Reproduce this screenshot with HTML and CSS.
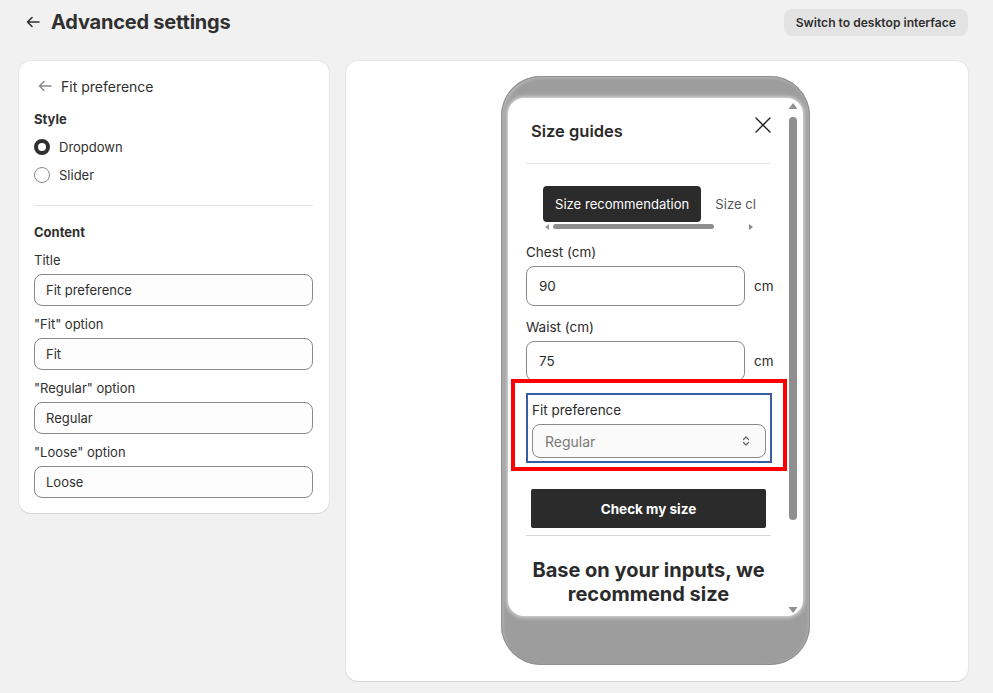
FILE: index.html
```html
<!DOCTYPE html>
<html lang="en">
<head>
<meta charset="utf-8">
<title>Advanced settings</title>
<link rel="stylesheet" href="styles.css">
</head>
<body>
<header class="topbar">
  <div class="title-wrap">
    <svg class="back" width="16" height="16" viewBox="0 0 16 16"><path d="M14 8H2.5M2.5 8l4.5-4.5M2.5 8l4.5 4.5" fill="none" stroke="#303030" stroke-width="1.6" stroke-linecap="round" stroke-linejoin="round"/></svg>
    <h1>Advanced settings</h1>
  </div>
  <button class="switch-btn">Switch to desktop interface</button>
</header>
<main class="layout">
  <aside class="card settings">
    <div class="back-row">
      <svg width="16" height="16" viewBox="0 0 16 16"><path d="M14 8H2.5M2.5 8l4.5-4.5M2.5 8l4.5 4.5" fill="none" stroke="#8a8a8a" stroke-width="1.5" stroke-linecap="round" stroke-linejoin="round"/></svg>
      <span>Fit preference</span>
    </div>
    <section class="group">
      <h2>Style</h2>
      <label class="radio"><span class="dot checked"></span>Dropdown</label>
      <label class="radio"><span class="dot"></span>Slider</label>
    </section>
    <hr class="divider">
    <section class="group">
      <h2>Content</h2>
      <div class="field"><div class="flabel">Title</div><div class="input">Fit preference</div></div>
      <div class="field"><div class="flabel">"Fit" option</div><div class="input">Fit</div></div>
      <div class="field"><div class="flabel">"Regular" option</div><div class="input">Regular</div></div>
      <div class="field"><div class="flabel">"Loose" option</div><div class="input">Loose</div></div>
    </section>
  </aside>
  <section class="card preview">
    <div class="phone">
      <div class="screen">
        <div class="screen-content">
          <div class="sg-head">
            <span class="sg-title">Size guides</span>
            <svg class="close" width="16" height="16" viewBox="0 0 16 16"><path d="M1 1l14 14M15 1L1 15" stroke="#222" stroke-width="1.4" stroke-linecap="round"/></svg>
          </div>
          <div class="rule"></div>
          <div class="tabs">
            <div class="tab-row">
              <span class="tab active">Size recommendation</span>
              <span class="tab">Size cl</span>
            </div>
            <div class="hscroll">
              <svg width="5" height="6" viewBox="0 0 5 6"><path d="M0 3L4 0V6Z" fill="#9a9a9a"/></svg>
              <span class="hthumb"></span>
              <span class="hgap"></span>
              <svg width="5" height="6" viewBox="0 0 5 6"><path d="M5 3L1 0V6Z" fill="#8a8a8a"/></svg>
            </div>
          </div>
          <div class="mfield chest">
            <div class="mlabel">Chest (cm)</div>
            <div class="mrow"><div class="minput">90</div><span class="unit">cm</span></div>
          </div>
          <div class="mfield waist">
            <div class="mlabel">Waist (cm)</div>
            <div class="mrow"><div class="minput">75</div><span class="unit">cm</span></div>
          </div>
          <div class="fitbox">
            <div class="mlabel">Fit preference</div>
            <div class="select">
              <span>Regular</span>
              <svg width="10" height="14" viewBox="0 0 10 14"><path d="M2.5 5.5L5 3l2.5 2.5M2.5 8.5L5 11l2.5-2.5" fill="none" stroke="#666" stroke-width="1.2" stroke-linecap="round" stroke-linejoin="round"/></svg>
            </div>
          </div>
          <button class="check-btn">Check my size</button>
          <div class="rule rule2"></div>
          <p class="result">Base on your inputs, we recommend size</p>
        </div>
        <div class="vscroll">
          <svg width="10" height="8" viewBox="0 0 10 8"><path d="M5 1L9.5 7H0.5Z" fill="#8f8f8f"/></svg>
          <span class="vthumb"></span>
          <svg class="down" width="10" height="8" viewBox="0 0 10 8"><path d="M5 7L9.5 1H0.5Z" fill="#8f8f8f"/></svg>
        </div>
        <div class="highlight"></div>
      </div>
    </div>
  </section>
</main>
</body>
</html>
```

FILE: styles.css
```css
* { box-sizing: border-box; }
html, body { margin: 0; padding: 0; }
body {
  background: #f1f1f1;
  font-family: Inter, "Noto Sans", sans-serif;
  color: #303030;
  width: 993px;
  height: 693px;
  overflow: hidden;
}
.topbar {
  height: 61px;
  display: flex;
  align-items: flex-start;
  justify-content: space-between;
  padding: 9px 25px 0 25px;
}
.title-wrap {
  display: flex;
  align-items: center;
  gap: 10px;
  height: 26px;
}
h1 {
  margin: 0;
  font-size: 20px;
  font-weight: 700;
  letter-spacing: -0.2px;
  color: #303030;
  line-height: 26px;
}
.switch-btn {
  border: none;
  background: #e3e3e3;
  border-radius: 8px;
  height: 27px;
  padding: 0 12px;
  font-family: inherit;
  font-size: 12.1px;
  font-weight: 600;
  color: #303030;
}
.layout {
  display: flex;
  align-items: flex-start;
  gap: 17px;
  padding: 0 25px 0 19px;
}
.card {
  background: #fff;
  border-radius: 12px;
  box-shadow: 0 1px 0 #d4d4d4, 0 0 0 1px #e6e6e6;
}
.settings {
  width: 310px;
  padding: 15px 16px 15px 15px;
}
.back-row {
  display: flex;
  align-items: center;
  gap: 8px;
  height: 20px;
  padding-left: 3px;
  font-size: 14px;
  color: #303030;
}
.group { display: flex; flex-direction: column; }
.settings > .group:first-of-type { margin-top: 13px; }
h2 {
  margin: 0;
  font-size: 13px;
  font-weight: 650;
  line-height: 20px;
}
.radio {
  display: flex;
  align-items: center;
  gap: 9px;
  height: 20px;
  margin-top: 8px;
  font-size: 13px;
}
.dot {
  width: 16px;
  height: 16px;
  border-radius: 50%;
  border: 1px solid #8a8a8a;
  background: #fff;
}
.dot.checked { border: 4.5px solid #303030; }
.divider {
  border: none;
  border-top: 1px solid #e3e3e3;
  margin: 20px 0 16px 0;
}
.field { margin-top: 8px; }
.flabel { font-size: 13px; line-height: 20px; margin-bottom: 4px; }
.input {
  height: 32px;
  border: 1px solid #8a8a8a;
  border-radius: 8px;
  background: #fdfdfd;
  padding: 0 11px;
  font-size: 13px;
  line-height: 30px;
}
.preview {
  width: 622px;
  height: 620px;
  display: flex;
  justify-content: center;
  padding-top: 15px;
  padding-right: 3px;
}
.phone {
  width: 309px;
  height: 589px;
  border-radius: 40px;
  background: #9d9d9d;
  box-shadow: inset 0 0 0 1px #8f8f8f, inset 2px 2px 3px #b8b8b8, inset -2px 0 3px #b0b0b0;
  padding: 22px 7px 0 7px;
}
.screen {
  position: relative;
  height: 518px;
  background: #fff;
  border-radius: 16px;
  box-shadow: 0 0 4px 1px #e2e2e2;
  display: flex;
  overflow: hidden;
}
.screen-content {
  width: 263px;
  padding: 0 0 0 18px;
  color: #2b2b2b;
  flex: none;
}
.sg-head {
  display: flex;
  justify-content: space-between;
  align-items: center;
  height: 65px;
  padding: 0 0 0 5px;
}
.sg-title { font-size: 16.5px; font-weight: 600; color: #2b2b2b; }
.close { margin-top: -11px; }
.rule { height: 1px; background: #e4e4e4; width: 245px; }
.tabs { padding: 22px 0 0 17px; }
.tab-row { display: flex; align-items: center; gap: 14px; height: 36px; }
.tab { font-size: 13.1px; color: #555; white-space: nowrap; }
.tab.active {
  background: #2b2b2b;
  color: #fff;
  border-radius: 4px;
  height: 36px;
  line-height: 36px;
  padding: 0 12px;
}
.hscroll {
  display: flex;
  align-items: center;
  height: 7px;
  margin-top: 1px;
  padding-left: 2px;
  gap: 3px;
  width: 210px;
}
.hthumb { width: 161px; height: 5px; background: #8f8f8f; border-radius: 3px; }
.hgap { flex: 1; }
.mfield.chest { margin-top: 12px; }
.mfield.waist { margin-top: 11px; }
.mlabel { font-size: 13.5px; line-height: 20px; color: #2b2b2b; }
.mrow { display: flex; align-items: center; gap: 9px; margin-top: 4px; }
.minput {
  width: 219px;
  height: 40px;
  border: 1px solid #8a8a8a;
  border-radius: 8px;
  padding: 0 12px;
  line-height: 38px;
  font-size: 13.5px;
  flex: none;
}
.unit { font-size: 13.5px; }
.fitbox {
  margin-top: 12px;
  width: 246px;
  height: 70px;
  border: 2px solid #3b5ba5;
  padding: 5px 4px 0 4px;
}
.select {
  margin-top: 4px;
  height: 34px;
  border: 1px solid #8a8a8a;
  border-radius: 8px;
  background: #fafafa;
  display: flex;
  align-items: center;
  justify-content: space-between;
  padding: 0 14px 0 12px;
  font-size: 14px;
  color: #7a7a7a;
}
.check-btn {
  display: block;
  margin: 26px 0 0 5px;
  width: 235px;
  height: 39px;
  border: none;
  border-radius: 2px;
  background: #2b2b2b;
  color: #fff;
  font-family: inherit;
  font-size: 13.5px;
  font-weight: 700;
}
.rule2 { margin-top: 7px; background: #d8d8d8; }
.result {
  margin: 22px 0 0 0;
  width: 245px;
  text-align: center;
  font-size: 20px;
  font-weight: 700;
  line-height: 24px;
  color: #2b2b2b;
}
.vscroll {
  margin-left: 17px;
  width: 10px;
  display: flex;
  flex-direction: column;
  align-items: center;
  padding-top: 4px;
  height: 518px;
}
.vthumb {
  width: 8px;
  height: 403px;
  margin-top: 7px;
  background: #8f8f8f;
  border-radius: 4px;
}
.vscroll .down { margin-top: auto; margin-bottom: 2px; }
.highlight {
  position: absolute;
  left: 3px;
  top: 281px;
  width: 276px;
  height: 92px;
  border: 4px solid #f00;
  pointer-events: none;
}
```
